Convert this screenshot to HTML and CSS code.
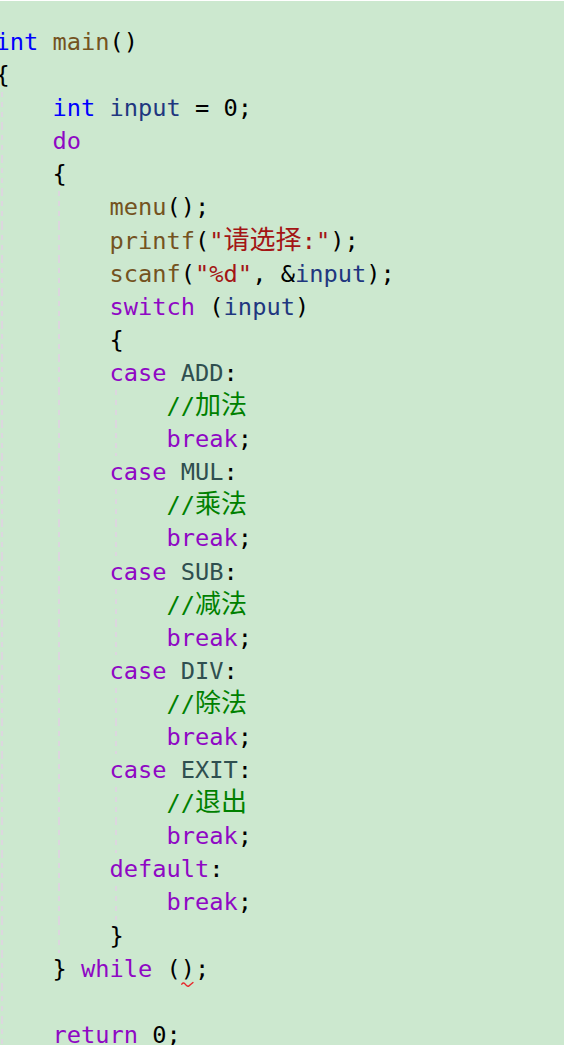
FILE: index.html
```html
<!DOCTYPE html>
<html lang="zh">
<head>
<meta charset="utf-8">
<title>main.c</title>
<link rel="stylesheet" href="styles.css">
</head>
<body>
<div class="editor">
<div class="code">
<div class="ln"><span class="kw">int</span> <span class="fn">main</span>()</div>
<div class="ln">{</div>
<div class="ln g0">    <span class="kw">int</span> <span class="v">input</span> = 0;</div>
<div class="ln g0">    <span class="ck">do</span></div>
<div class="ln g0">    {</div>
<div class="ln g04">        <span class="fn">menu</span>();</div>
<div class="ln g04">        <span class="fn">printf</span>(<span class="s">"<span class="cjk">请选择</span>:"</span>);</div>
<div class="ln g04">        <span class="fn">scanf</span>(<span class="s">"%d"</span>, &amp;<span class="v">input</span>);</div>
<div class="ln g04">        <span class="ck">switch</span> (<span class="v">input</span>)</div>
<div class="ln g04">        {</div>
<div class="ln g04">        <span class="ck">case</span> <span class="e">ADD</span>:</div>
<div class="ln g048">            <span class="c">//<span class="cjk">加法</span></span></div>
<div class="ln g048">            <span class="ck">break</span>;</div>
<div class="ln g04">        <span class="ck">case</span> <span class="e">MUL</span>:</div>
<div class="ln g048">            <span class="c">//<span class="cjk">乘法</span></span></div>
<div class="ln g048">            <span class="ck">break</span>;</div>
<div class="ln g04">        <span class="ck">case</span> <span class="e">SUB</span>:</div>
<div class="ln g048">            <span class="c">//<span class="cjk">减法</span></span></div>
<div class="ln g048">            <span class="ck">break</span>;</div>
<div class="ln g04">        <span class="ck">case</span> <span class="e">DIV</span>:</div>
<div class="ln g048">            <span class="c">//<span class="cjk">除法</span></span></div>
<div class="ln g048">            <span class="ck">break</span>;</div>
<div class="ln g04">        <span class="ck">case</span> <span class="e">EXIT</span>:</div>
<div class="ln g048">            <span class="c">//<span class="cjk">退出</span></span></div>
<div class="ln g048">            <span class="ck">break</span>;</div>
<div class="ln g04">        <span class="ck">default</span>:</div>
<div class="ln g048">            <span class="ck">break</span>;</div>
<div class="ln g04">        }</div>
<div class="ln g0">    } <span class="ck">while</span> (<span class="sq">)<svg class="squiggle" width="13" height="7" viewBox="0 0 13 7"><path d="M0.8 3.2 Q2.6 0.8 4.4 3.4 T8 4.8 T12 1.6" fill="none" stroke="#e8262b" stroke-width="1.4" stroke-linecap="round"/></svg></span>;</div>
<div class="ln g0"></div>
<div class="ln g0">    <span class="ck">return</span> 0;</div>
</div>
</div>
</body>
</html>
```

FILE: styles.css
```css
html, body {
  margin: 0;
  padding: 0;
  background: #ffffff;
}

.editor {
  margin-top: 1px;
  width: 564px;
  height: 1044px;
  background: #cce8cf;
  overflow: hidden;
}

.code {
  margin-left: -4.6px;
  padding-top: 25px;
  font-family: "DejaVu Sans Mono", "Noto Sans CJK SC", monospace;
  font-size: 23.7px;
  color: #000000;
}

.ln {
  height: 33.1px;
  line-height: 33.1px;
  white-space: pre;
}

.g0 {
  background:
    linear-gradient(#dcd6de 55%, transparent 55%) 5.8px 0 / 2px 10px repeat-y;
}

.g04 {
  background:
    linear-gradient(#dcd6de 55%, transparent 55%) 5.8px 0 / 2px 10px repeat-y,
    linear-gradient(#dcd6de 55%, transparent 55%) 62.8px 0 / 2px 10px repeat-y;
}

.g048 {
  background:
    linear-gradient(#dcd6de 55%, transparent 55%) 5.8px 0 / 2px 10px repeat-y,
    linear-gradient(#dcd6de 55%, transparent 55%) 62.8px 0 / 2px 10px repeat-y,
    linear-gradient(#dcd6de 55%, transparent 55%) 120px 0 / 2px 10px repeat-y;
}

.kw { color: #0000ff; }
.ck { color: #8f08c4; }
.fn { color: #74531f; }
.v  { color: #1f377f; }
.s  { color: #a31515; }
.c  { color: #008000; }
.e  { color: #2f4f4f; }

.cjk {
  font-family: "Noto Sans CJK SC", sans-serif;
  font-size: 26px;
  line-height: 20px;
}

.sq {
  position: relative;
}

.squiggle {
  position: absolute;
  left: 0px;
  top: 26px;
}
```
